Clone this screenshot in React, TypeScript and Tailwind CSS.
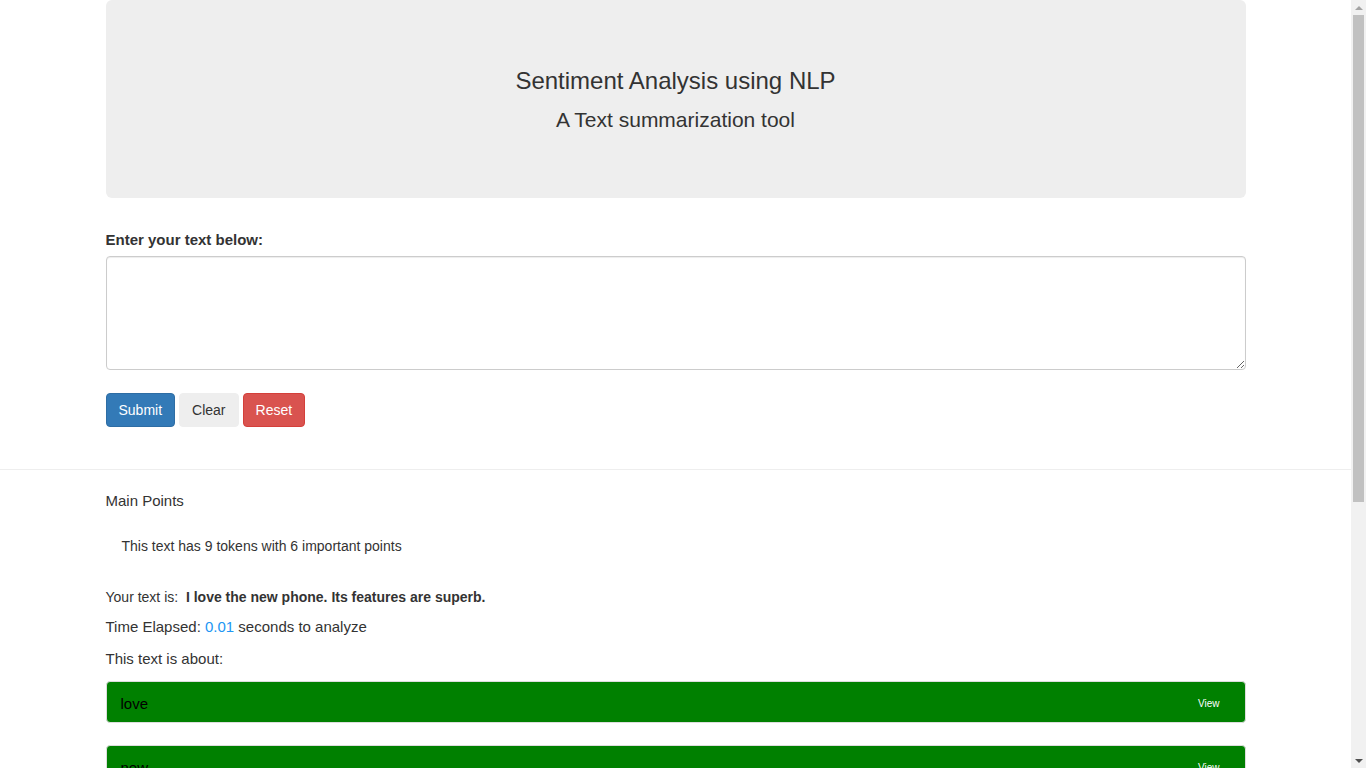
import React from "react";

const words = ["love", "new", "phone", "Its", "features", "superb"];

export default function App() {
  return (
    <div className="h-screen flex bg-white text-[#333] text-[14px] leading-[20px]" style={{ fontFamily: '"Liberation Sans", Arial, Helvetica, sans-serif' }}>
      <div className="flex-1 min-w-0 overflow-hidden">
        <div className="w-[1170px] mx-auto px-[15px]">
          <div className="h-[198px] bg-[#eee] rounded-[6px] pt-[68px] text-center">
            <h3 className="text-[24px] leading-[26px]">Sentiment Analysis using NLP</h3>
            <h4 className="text-[21px] leading-[22px] mt-[15px]">A Text summarization tool</h4>
          </div>
          <div className="mt-[32px]">
            <label className="block font-bold text-[15px] mb-[6px]">Enter your text below:</label>
            <textarea className="block w-full h-[114px] border border-[#ccc] rounded-[4px] px-3 py-[6px] shadow-[inset_0_1px_1px_rgba(0,0,0,0.075)]" />
          </div>
          <div className="mt-[23px] flex gap-[4px]">
            <button className="h-[34px] px-[12px] rounded-[4px] bg-[#337ab7] border border-[#2e6da4] text-white">Submit</button>
            <button className="h-[34px] px-[12px] rounded-[4px] bg-[#eee] border border-[#eee] text-[#333]">Clear</button>
            <button className="h-[34px] px-[12px] rounded-[4px] bg-[#d9534f] border border-[#d43f3a] text-white">Reset</button>
          </div>
        </div>
        <hr className="mt-[42px] border-0 border-t border-[#eee]" />
        <div className="w-[1170px] mx-auto px-[15px]">
          <div className="mt-[21px] text-[15px]">Main Points</div>
          <div className="mt-[25px] pl-[16px]">This text has 9 tokens with 6 important points</div>
          <div className="mt-[31px]">
            Your text is:&nbsp; <b>I love the new phone. Its features are superb.</b>
          </div>
          <div className="mt-[10px] text-[15px]">
            Time Elapsed: <span className="text-[#2196f3]">0.01</span> seconds to analyze
          </div>
          <div className="mt-[12px] text-[15px]">This text is about:</div>
          <div className="mt-[12px] flex flex-col gap-[22px] pb-[20px]">
            {words.map((w) => (
              <div key={w} className="h-[42px] shrink-0 bg-[#008000] border border-[#ddd] rounded-[4px] flex items-center justify-between pl-[14px] pr-[25px] pt-[3px]">
                <span className="text-black text-[15px]">{w}</span>
                <span className="text-white text-[10px]">View</span>
              </div>
            ))}
          </div>
        </div>
      </div>
      <div className="w-[15px] shrink-0 bg-[#f1f1f1] flex flex-col">
        <div className="h-[15px] flex items-center justify-center">
          <div className="w-0 h-0 border-l-[4px] border-r-[4px] border-b-[4px] border-l-transparent border-r-transparent border-b-[#a3a3a3]" />
        </div>
        <div className="h-[487px] mx-[2px] bg-[#c1c1c1]" />
        <div className="flex-1" />
        <div className="h-[15px] flex items-center justify-center">
          <div className="w-0 h-0 border-l-[4px] border-r-[4px] border-t-[4px] border-l-transparent border-r-transparent border-t-[#505050]" />
        </div>
      </div>
    </div>
  );
}
